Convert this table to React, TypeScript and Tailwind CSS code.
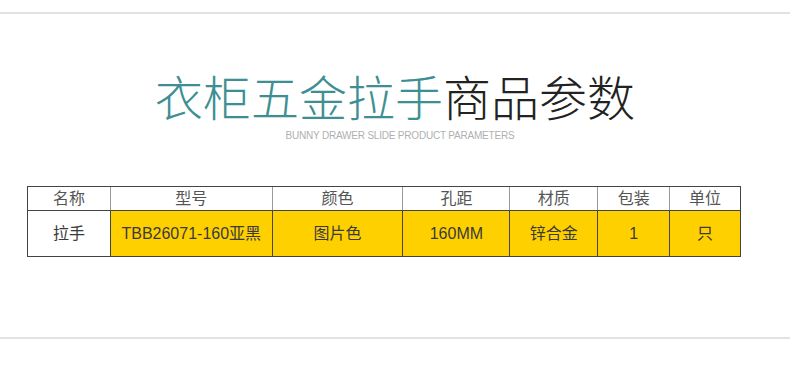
const head = ["名称", "型号", "颜色", "孔距", "材质", "包装", "单位"];
const row = ["拉手", "TBB26071-160亚黑", "图片色", "160MM", "锌合金", "1", "只"];
const widths = ["w-[82px]", "w-[162px]", "w-[131px]", "w-[107px]", "w-[88px]", "w-[72px]", "w-[71px]"];

export default function App() {
  return (
    <div className="w-[790px] h-[368px] bg-white overflow-hidden font-['Liberation_Sans','Noto_Sans_CJK_SC',sans-serif]">
      <div className="h-[12px]" />
      <div className="h-[2px] bg-[#e2e2e2]" />
      <div className="flex flex-col items-center pt-[62px]">
        <div className="text-[48px] leading-[48px] font-light">
          <span className="text-[#3d8f93]">衣柜五金拉手</span>
          <span className="text-[#222]">商品参数</span>
        </div>
        <div className="text-[10px] leading-[12px] mt-[6px] ml-[10px] text-[#b0b0b0] tracking-[-0.2px]">
          BUNNY DRAWER SLIDE PRODUCT PARAMETERS
        </div>
      </div>
      <div className="ml-[27px] mt-[44px] w-[714px] border border-[#444] text-[16px] text-[#3a3a3a]">
        <div className="flex h-[23px] text-[#555]">
          {head.map((h, i) => (
            <div
              key={h}
              className={`${widths[i]} flex items-center justify-center leading-none ${i > 0 ? "border-l border-[#999]" : ""}`}
            >
              {h}
            </div>
          ))}
        </div>
        <div className="flex h-[46px] border-t border-[#444]">
          {row.map((c, i) => (
            <div
              key={i}
              className={`${widths[i]} flex items-center justify-center leading-none ${i > 0 ? "bg-[#ffd000] border-l border-[#444]" : "bg-white"}`}
            >
              {c}
            </div>
          ))}
        </div>
      </div>
      <div className="mt-[80px] h-[2px] bg-[#e2e2e2]" />
    </div>
  );
}
